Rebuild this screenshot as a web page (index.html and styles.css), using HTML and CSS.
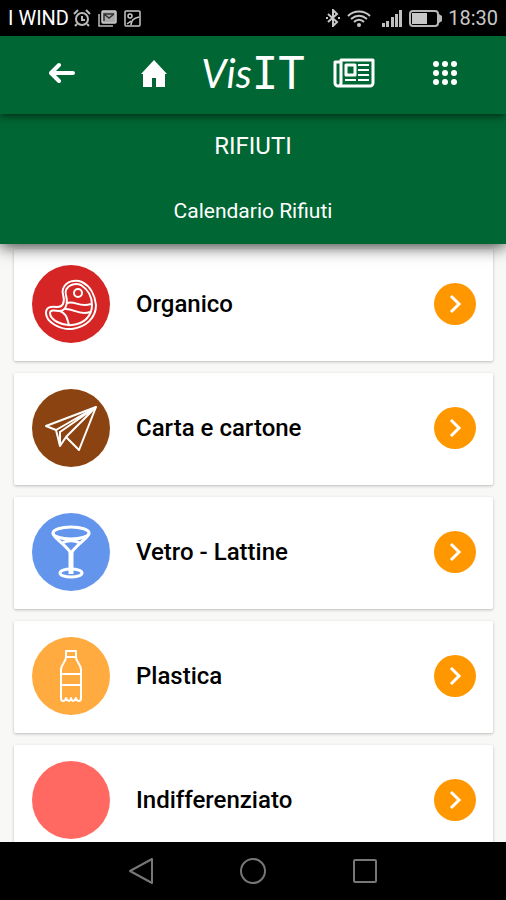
FILE: index.html
```html
<!DOCTYPE html>
<html lang="it">
<head>
    <meta charset="UTF-8">
    <meta name="viewport" content="width=device-width, initial-scale=1.0">
    <title>VisIT - Rifiuti</title>
    <link rel="stylesheet" href="styles.css">
</head>
<body>
    <div class="status-bar">
        <span class="carrier">I WIND</span>
        <svg width="18" height="18" viewBox="0 0 18 18" fill="none" stroke="#bbb" stroke-width="2">
            <circle cx="9" cy="10" r="6"/>
            <path d="M1 5l4-4M17 5l-4-4M4 15l-2 2M14 15l2 2M9 7v4h3"/>
        </svg>
        <svg class="status-gallery" width="19" height="17" viewBox="0 0 19 17">
            <path d="M1 4v12h14" fill="none" stroke="#bbb" stroke-width="1.5"/>
            <rect x="4" y="1" width="14" height="12" rx="1" fill="#aaa" stroke="#ccc" stroke-width="1.5"/>
            <path d="M6 4l5 4 5-4M6 11V4h10" fill="none" stroke="#333" stroke-width="1.5"/>
        </svg>
        <svg class="status-photo" width="17" height="17" viewBox="0 0 17 17" fill="none" stroke="#c8c8c8" stroke-width="1.5">
            <rect x="1" y="1" width="15" height="15" rx="1"/>
            <circle cx="6" cy="6" r="2"/>
            <path d="M3 14l4-3M7 15c0-5 3-7 8-8"/>
        </svg>
        <span class="spacer"></span>
        <svg width="14" height="18" viewBox="0 0 14 18" fill="none" stroke="#c8c8c8" stroke-width="2">
            <path d="M2 5l9 8-4 4V1l4 4-9 8"/>
            <path d="M0 9h2M12 9h2"/>
        </svg>
        <svg class="status-wifi" width="24" height="17" viewBox="0 0 24 17" fill="none" stroke="#c8c8c8" stroke-width="2">
            <path d="M1 6c6-6 16-6 22 0M4 9c5-4 11-4 16 0M7 12c3-3 7-3 10 0"/>
            <circle cx="12" cy="15" r="2" fill="#c8c8c8" stroke="none"/>
        </svg>
        <svg class="status-signal" width="22" height="18" viewBox="0 0 22 18" fill="#c0c0c0">
            <path d="M1 14h3v4H1zM5 12h3v6H5zM10 8h3v10h-3zM14 5h3v13h-3zM18 1h3v17h-3z"/>
        </svg>
        <svg class="status-battery" width="33" height="17" viewBox="0 0 33 17">
            <rect x="1" y="1" width="28" height="15" rx="3" fill="none" stroke="#b8b8b8" stroke-width="2"/>
            <path d="M3 3h15v11H3z" fill="#c8c8c8"/>
            <path d="M30 4l3 2v5l-3 2z" fill="#b8b8b8"/>
        </svg>
        <span class="clock">18:30</span>
    </div>

    <header class="toolbar">
        <button type="button" aria-label="Indietro">
            <svg width="26" height="22" viewBox="0 0 26 22" fill="none" stroke="#fff" stroke-width="4" stroke-linecap="round" stroke-linejoin="round">
                <path d="M10 3l-8 8 8 8M3 11h21"/>
            </svg>
        </button>
        <button type="button" aria-label="Home">
            <svg width="28" height="28" viewBox="0 0 28 28" fill="#fff">
                <path d="M14 1L1 15h2v13h9v-9h4v9h9V15h2z"/>
            </svg>
        </button>
        <a class="logo" href="#">Vis<span>IT</span></a>
        <button type="button" aria-label="Notizie">
            <svg width="42" height="30" viewBox="0 0 42 30" fill="none" stroke="#fff" stroke-width="3" stroke-linejoin="round">
                <path d="M8 2h32v23a3 3 0 0 1-3 3H5a3 3 0 0 1-3-3V4h6zM8 4v21a3 3 0 0 1-3 3"/>
                <rect x="13" y="7" width="9" height="10"/>
                <path d="M25 7h11M25 12h11M25 17h11M12 22h11M25 22h11" stroke-width="2"/>
            </svg>
        </button>
        <button type="button" aria-label="Menu">
            <svg width="24" height="24" viewBox="0 0 24 24" fill="#fff">
                <circle cx="3" cy="3" r="3"/>
                <circle cx="12" cy="3" r="3"/>
                <circle cx="21" cy="3" r="3"/>
                <circle cx="3" cy="12" r="3"/>
                <circle cx="12" cy="12" r="3"/>
                <circle cx="21" cy="12" r="3"/>
                <circle cx="3" cy="21" r="3"/>
                <circle cx="12" cy="21" r="3"/>
                <circle cx="21" cy="21" r="3"/>
            </svg>
        </button>
    </header>

    <div class="section-head">
        <h1>RIFIUTI</h1>
        <a href="#">Calendario Rifiuti</a>
    </div>

    <main>
        <ul class="list">
            <li>
                <a class="card" href="#">
                    <span class="icon organico">
                        <svg viewBox="0 0 78 78">
                            <path d="M31 39C34 33 29 29 31 24C34 16 43 14 50 17C58 21 63 30 64 40C64 53 54 62 40 64C28 65 14 57 14 48C14 42 19 41 25 42C28 42 30 41 31 39Z"/>
                            <path d="M34 41C37 34 32 29 34 25C37 19 44 18 49 20C55 24 60 31 60 40C60 51 52 59 40 60C30 61 18 55 18 48C18 45 22 45 27 46C31 46 33 44 34 41Z"/>
                            <path d="M35 38c8-3 12 5 24 1M33 44c8-1 14 7 25 3M28 46c7 3 7 8 9 14"/>
                            <circle cx="46" cy="28" r="4"/>
                        </svg>
                    </span>
                    <span class="name">Organico</span>
                    <span class="arrow"><svg viewBox="0 0 42 42"><path d="M17 13l8 8-8 8"/></svg></span>
                </a>
            </li>
            <li>
                <a class="card" href="#">
                    <span class="icon carta">
                        <svg viewBox="0 0 78 78">
                            <path d="M64 18L14 37l10 4 4 16 6-9 13 13z"/>
                            <path d="M64 18L24 41M64 18L28 43v14M64 18L34 48"/>
                        </svg>
                    </span>
                    <span class="name">Carta e cartone</span>
                    <span class="arrow"><svg viewBox="0 0 42 42"><path d="M17 13l8 8-8 8"/></svg></span>
                </a>
            </li>
            <li>
                <a class="card" href="#">
                    <span class="icon vetro">
                        <svg viewBox="0 0 78 78">
                            <ellipse cx="39" cy="20" rx="18" ry="6"/>
                            <path d="M21 20c0 5 10 9 18 20 8-11 18-15 18-20M30 30c6-3 12-3 18 0"/>
                            <path d="M39 38v23" stroke-width="5"/>
                            <ellipse cx="39" cy="60" rx="11" ry="4"/>
                        </svg>
                    </span>
                    <span class="name">Vetro - Lattine</span>
                    <span class="arrow"><svg viewBox="0 0 42 42"><path d="M17 13l8 8-8 8"/></svg></span>
                </a>
            </li>
            <li>
                <a class="card" href="#">
                    <span class="icon plastica">
                        <svg viewBox="0 0 78 78">
                            <path d="M34 14h10v6H34zM34 20c0 5-4 6-5 12v29c0 4 4 4 5 0 2 4 4 4 5 0 1 4 3 4 5 0 1 4 5 4 5 0V32c-1-6-5-7-5-12M29 37h20M29 48h20"/>
                        </svg>
                    </span>
                    <span class="name">Plastica</span>
                    <span class="arrow"><svg viewBox="0 0 42 42"><path d="M17 13l8 8-8 8"/></svg></span>
                </a>
            </li>
            <li>
                <a class="card" href="#">
                    <span class="icon indifferenziato"></span>
                    <span class="name">Indifferenziato</span>
                    <span class="arrow"><svg viewBox="0 0 42 42"><path d="M17 13l8 8-8 8"/></svg></span>
                </a>
            </li>
        </ul>
    </main>

    <nav class="system-nav">
        <button type="button" aria-label="Indietro">
            <svg width="28" height="28" viewBox="0 0 28 28"><path d="M25 2v24L3 14z"/></svg>
        </button>
        <button type="button" aria-label="Schermata principale">
            <svg width="28" height="28" viewBox="0 0 28 28"><circle cx="14" cy="14" r="12"/></svg>
        </button>
        <button type="button" aria-label="App recenti">
            <svg width="28" height="28" viewBox="0 0 28 28"><rect x="3" y="3" width="22" height="22" rx="1"/></svg>
        </button>
    </nav>
</body>
</html>
```
FILE: styles.css
```css
* {
    box-sizing: border-box;
}
body {
    display: flex;
    flex-direction: column;
    height: 100vh;
    margin: 0;
    background-color: #f8f8f7;
    font-family: Roboto, Arial, sans-serif;
}
a {
    color: inherit;
    text-decoration: none;
}
button {
    display: flex;
    align-items: center;
    justify-content: center;
    padding: 0;
    border: none;
    background: none;
    cursor: pointer;
}

/* barra di stato */
.status-bar {
    display: flex;
    align-items: center;
    flex-shrink: 0;
    height: 36px;
    padding: 0 8px;
    background-color: #000;
    color: #c8c8c8;
    font-size: 20px;
}
.carrier {
    margin-right: 4px;
    color: #fff;
}
.status-gallery,
.status-photo,
.status-wifi {
    margin-left: 7px;
}
.spacer {
    flex: 1;
}
.status-signal {
    margin-left: 10px;
}
.status-battery {
    margin: 0 6px;
}

/* intestazione */
.toolbar {
    display: grid;
    grid-template-columns: 92fr 92fr 106fr 96fr 86fr;
    flex-shrink: 0;
    height: 78px;
    padding: 0 18px 4px 16px;
    background-color: #006633;
    box-shadow: 0 2px 8px rgba(0, 0, 0, 0.6);
    z-index: 2;
}
.logo {
    display: flex;
    align-items: center;
    justify-content: center;
    color: #fff;
    font-family: Lato, sans-serif;
    font-size: 40px;
    font-style: italic;
}
.logo span {
    font-family: "DejaVu Sans Mono", monospace;
    font-size: 44px;
    font-style: normal;
}
.section-head {
    display: flex;
    flex-direction: column;
    align-items: center;
    flex-shrink: 0;
    height: 130px;
    padding-top: 16px;
    background-color: #006633;
    box-shadow: 0 2px 16px rgba(0, 0, 0, 0.8);
    color: #fff;
    z-index: 1;
}
.section-head h1 {
    margin: 0 0 36px;
    font-size: 24px;
    font-weight: 400;
    line-height: 32px;
}
.section-head a {
    font-size: 21px;
    line-height: 26px;
}

/* elenco */
main {
    flex: 1;
    min-height: 0;
    overflow-y: auto;
    scrollbar-width: none;
}
.list {
    display: flex;
    flex-direction: column;
    gap: 12px;
    margin: 0;
    padding: 5px 13px 12px 14px;
    list-style: none;
}
.card {
    display: flex;
    align-items: center;
    height: 112px;
    padding: 0 17px 2px 18px;
    border-radius: 2px;
    background-color: #fff;
    box-shadow: 0 1px 3px rgba(0, 0, 0, 0.25);
}
.icon {
    width: 78px;
    height: 78px;
    margin-right: 26px;
    border-radius: 50%;
}
.icon svg {
    display: block;
    fill: none;
    stroke: #fff;
    stroke-width: 2;
    stroke-linejoin: round;
}
.organico {
    background-color: #d52525;
}
.carta {
    background-color: #8b4411;
}
.vetro {
    background-color: #6395ed;
}
.vetro svg {
    stroke-width: 3;
}
.plastica {
    background-color: #ffab40;
}
.indifferenziato {
    background-color: #ff6961;
}
.name {
    flex: 1;
    color: #000;
    font-size: 24px;
    font-weight: 500;
}
.arrow {
    width: 42px;
    height: 42px;
    border-radius: 50%;
    background-color: #ff9800;
}
.arrow svg {
    display: block;
    fill: none;
    stroke: #fff;
    stroke-width: 3;
}

/* tasti di sistema */
.system-nav {
    display: flex;
    justify-content: center;
    gap: 84px;
    flex-shrink: 0;
    height: 58px;
    background-color: #000;
    z-index: 1;
}
.system-nav svg {
    fill: none;
    stroke: #777;
    stroke-width: 2;
    stroke-linejoin: round;
}
```
